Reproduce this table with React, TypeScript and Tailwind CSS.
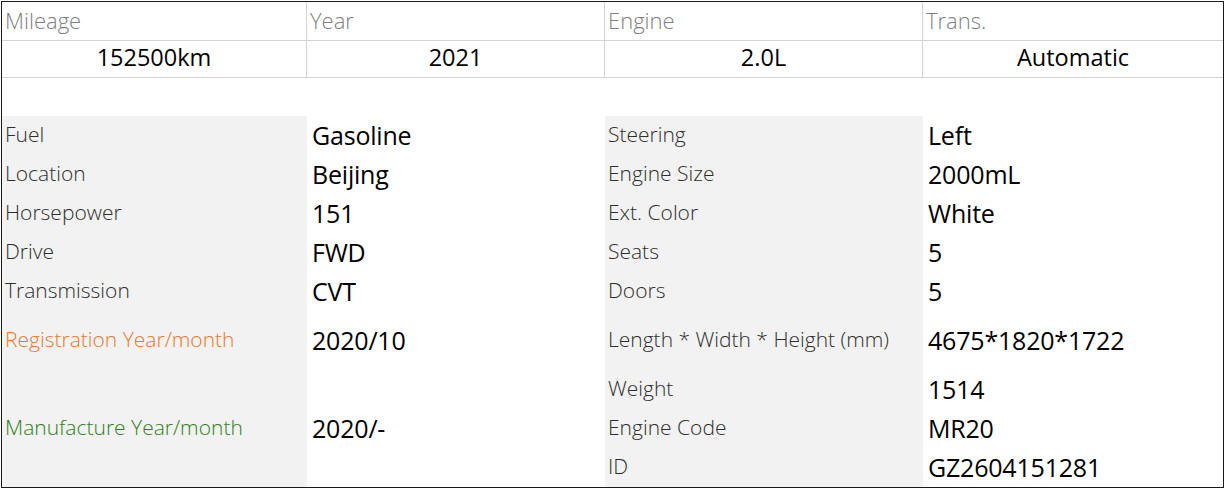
import React from "react";

const summary = [
  { label: "Mileage", value: "152500km" },
  { label: "Year", value: "2021" },
  { label: "Engine", value: "2.0L" },
  { label: "Trans.", value: "Automatic" },
];

type Spec = { label: string; value: string; tone?: string };

const leftSpecs: Spec[] = [
  { label: "Fuel", value: "Gasoline" },
  { label: "Location", value: "Beijing" },
  { label: "Horsepower", value: "151" },
  { label: "Drive", value: "FWD" },
  { label: "Transmission", value: "CVT" },
  { label: "Registration Year/month", value: "2020/10", tone: "text-[#e8792e]" },
];

const rightSpecs: Spec[] = [
  { label: "Steering", value: "Left" },
  { label: "Engine Size", value: "2000mL" },
  { label: "Ext. Color", value: "White" },
  { label: "Seats", value: "5" },
  { label: "Doors", value: "5" },
  { label: "Length * Width * Height (mm)", value: "4675*1820*1722" },
  { label: "Weight", value: "1514" },
  { label: "Engine Code", value: "MR20" },
  { label: "ID", value: "GZ2604151281" },
];

const font = "font-['Open_Sans','Noto_Sans',sans-serif]";

function Label({ children, tone }: { children: React.ReactNode; tone?: string }) {
  return (
    <span className={`text-[21px] font-light leading-none ${tone ?? "text-[#2e2e2e]"}`}>
      {children}
    </span>
  );
}

function Value({ children }: { children: React.ReactNode }) {
  return (
    <span className="text-[25px] leading-none tracking-[-0.2px] text-black">{children}</span>
  );
}

export default function App() {
  return (
    <div className={`bg-white pl-px pt-px ${font}`}>
      <div className="w-[1223px] h-[487px] border border-[#1a1a1a]">
        {/* summary strip */}
        <div className="grid grid-cols-[305px_298px_318px_300px]">
          {summary.map((item, i) => (
            <div
              key={item.label}
              className={`flex h-[39px] items-center border-b border-[#d4d4d4] pb-[3px] pl-[3px] ${
                i < 3 ? "border-r" : ""
              }`}
            >
              <span className="text-[22px] font-light leading-none text-[#7f7f7f]">
                {item.label}
              </span>
            </div>
          ))}
          {summary.map((item, i) => (
            <div
              key={item.value}
              className={`flex h-[37px] items-center justify-center border-b border-[#d4d4d4] pb-[2px] ${
                i < 3 ? "border-r" : ""
              }`}
            >
              <span className="text-[23.5px] leading-none text-black">{item.value}</span>
            </div>
          ))}
        </div>

        <div className="h-[38px]" />

        {/* details */}
        <div className="grid grid-cols-[305px_298px_318px_300px] grid-rows-[repeat(5,39px)_59px_39px_39px_39px]">
          {/* left half */}
          <div className="col-start-1 row-span-9 row-start-1 grid grid-rows-subgrid bg-[#f2f2f2]">
            {leftSpecs.map((s) => (
              <div key={s.label} className="flex items-center pb-[2px] pl-[3px]">
                <Label tone={s.tone}>{s.label}</Label>
              </div>
            ))}
            <div className="row-span-3 flex items-center pb-[2px] pl-[3px]">
              <Label tone="text-[#2f7f22]">Manufacture Year/month</Label>
            </div>
          </div>
          <div className="col-start-2 row-span-9 row-start-1 grid grid-rows-subgrid">
            {leftSpecs.map((s) => (
              <div key={s.label} className="flex items-center pb-[1px] pl-[5px]">
                <Value>{s.value}</Value>
              </div>
            ))}
            <div className="row-span-3 flex items-center pb-[1px] pl-[5px]">
              <Value>2020/-</Value>
            </div>
          </div>

          {/* right half */}
          <div className="col-start-3 row-span-9 row-start-1 grid grid-rows-subgrid bg-[#f2f2f2]">
            {rightSpecs.map((s) => (
              <div key={s.label} className="flex items-center pb-[2px] pl-[3px]">
                <Label>{s.label}</Label>
              </div>
            ))}
          </div>
          <div className="col-start-4 row-span-9 row-start-1 grid grid-rows-subgrid">
            {rightSpecs.map((s) => (
              <div key={s.label} className="flex items-center pb-[1px] pl-[5px]">
                <Value>{s.value}</Value>
              </div>
            ))}
          </div>
        </div>
      </div>
    </div>
  );
}
